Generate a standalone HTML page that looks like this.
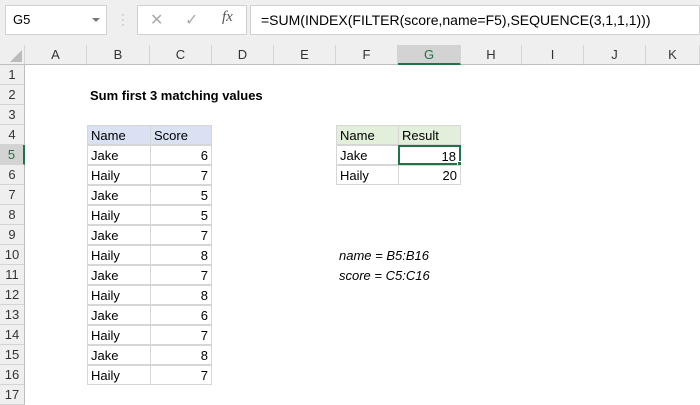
<!DOCTYPE html>
<html><head><style>
*{margin:0;padding:0;box-sizing:border-box}
body{width:700px;height:400px;overflow:hidden;background:#fff;font-family:"Liberation Sans",Calibri,sans-serif;font-size:13px;color:#000;position:relative}
.abs{position:absolute}
.ch{position:absolute;top:45px;height:20px;border-right:1px solid #d4d4d4;border-bottom:1px solid #bdbdbd;background:#efefef;text-align:center;line-height:19px;color:#333;font-size:13px}
.rh{position:absolute;left:0;width:25px;height:20px;border-bottom:1px solid #d4d4d4;border-right:1px solid #bdbdbd;background:#efefef;text-align:center;line-height:20px;color:#333;font-size:13px}
.c{position:absolute;height:20px;line-height:20px;padding:0 3px;white-space:nowrap;border:1px solid #d6d6d6}
.r{text-align:right}
</style></head><body>
<div class="abs" style="left:0;top:0;width:700px;height:45px;background:#efefef"></div>
<div class="abs" style="left:5px;top:5px;width:102px;height:30px;background:#fff;border:1px solid #d0d0d0;line-height:28px;padding-left:7px">G5</div>
<div class="abs" style="left:92px;top:18px;width:0;height:0;border-left:4px solid transparent;border-right:4px solid transparent;border-top:4px solid #777"></div>
<div class="abs" style="left:121px;top:12px;color:#aaa;font-size:12px;line-height:5px">·<br>·<br>·</div>
<div class="abs" style="left:137px;top:5px;width:110px;height:30px;background:#fff;border:1px solid #d0d0d0"></div>
<div class="abs" style="left:150px;top:10px;color:#aaa;font-size:16px">✕</div>
<div class="abs" style="left:185px;top:10px;color:#aaa;font-size:16px">✓</div>
<div class="abs" style="left:222px;top:9px;color:#555;font-family:'Liberation Serif',serif;font-style:italic;font-size:15px">fx</div>
<div class="abs" style="left:250px;top:5px;width:450px;height:30px;background:#fff;border:1px solid #d0d0d0;line-height:28px;padding-left:10px;font-size:14px">=SUM(INDEX(FILTER(score,name=F5),SEQUENCE(3,1,1,1)))</div>
<div class="ch" style="left:0;width:25px"></div>
<div class="abs" style="left:10px;top:50px;width:0;height:0;border-left:12px solid transparent;border-bottom:12px solid #bbb"></div>
<div class="ch" style="left:25px;width:62px">A</div>
<div class="ch" style="left:87px;width:63px">B</div>
<div class="ch" style="left:150px;width:62px">C</div>
<div class="ch" style="left:212px;width:62px">D</div>
<div class="ch" style="left:274px;width:62px">E</div>
<div class="ch" style="left:336px;width:62px">F</div>
<div class="ch" style="left:398px;width:63px;background:#d3d3d3;border-bottom:2px solid #217346;color:#217346">G</div>
<div class="ch" style="left:461px;width:61px">H</div>
<div class="ch" style="left:522px;width:62px">I</div>
<div class="ch" style="left:584px;width:62px">J</div>
<div class="ch" style="left:646px;width:54px">K</div>
<div class="rh" style="top:65px">1</div><div class="rh" style="top:85px">2</div><div class="rh" style="top:105px">3</div><div class="rh" style="top:125px">4</div>
<div class="rh" style="top:145px;background:#d3d3d3;border-right:2px solid #217346;color:#217346">5</div>
<div class="rh" style="top:165px">6</div><div class="rh" style="top:185px">7</div><div class="rh" style="top:205px">8</div><div class="rh" style="top:225px">9</div><div class="rh" style="top:245px">10</div><div class="rh" style="top:265px">11</div><div class="rh" style="top:285px">12</div><div class="rh" style="top:305px">13</div><div class="rh" style="top:325px">14</div><div class="rh" style="top:345px">15</div><div class="rh" style="top:365px">16</div><div class="rh" style="top:385px">17</div>
<div class="abs" style="left:90px;top:88px;font-weight:bold;font-size:13px">Sum first 3 matching values</div>
<div class="c" style="left:87px;top:125px;width:64px;background:#d9e1f2">Name</div>
<div class="c" style="left:150px;top:125px;width:62px;background:#d9e1f2">Score</div>
<div id="t"></div>
<div class="c" style="left:336px;top:125px;width:63px;background:#e2efda">Name</div>
<div class="c" style="left:398px;top:125px;width:63px;background:#e2efda">Result</div>
<div class="c" style="left:336px;top:145px;width:63px">Jake</div>
<div class="c r" style="left:398px;top:145px;width:63px;border:2px solid #217346">18</div>
<div class="abs" style="left:457px;top:161px;width:5px;height:5px;background:#217346;border:1px solid #fff"></div>
<div class="c" style="left:336px;top:165px;width:63px">Haily</div>
<div class="c r" style="left:398px;top:165px;width:63px">20</div>
<div class="abs" style="left:339px;top:248px;font-style:italic">name = B5:B16</div>
<div class="abs" style="left:339px;top:268px;font-style:italic">score = C5:C16</div>
<div class="c" style="left:87px;top:145px;width:64px">Jake</div><div class="c r" style="left:150px;top:145px;width:62px">6</div>
<div class="c" style="left:87px;top:165px;width:64px">Haily</div><div class="c r" style="left:150px;top:165px;width:62px">7</div>
<div class="c" style="left:87px;top:185px;width:64px">Jake</div><div class="c r" style="left:150px;top:185px;width:62px">5</div>
<div class="c" style="left:87px;top:205px;width:64px">Haily</div><div class="c r" style="left:150px;top:205px;width:62px">5</div>
<div class="c" style="left:87px;top:225px;width:64px">Jake</div><div class="c r" style="left:150px;top:225px;width:62px">7</div>
<div class="c" style="left:87px;top:245px;width:64px">Haily</div><div class="c r" style="left:150px;top:245px;width:62px">8</div>
<div class="c" style="left:87px;top:265px;width:64px">Jake</div><div class="c r" style="left:150px;top:265px;width:62px">7</div>
<div class="c" style="left:87px;top:285px;width:64px">Haily</div><div class="c r" style="left:150px;top:285px;width:62px">8</div>
<div class="c" style="left:87px;top:305px;width:64px">Jake</div><div class="c r" style="left:150px;top:305px;width:62px">6</div>
<div class="c" style="left:87px;top:325px;width:64px">Haily</div><div class="c r" style="left:150px;top:325px;width:62px">7</div>
<div class="c" style="left:87px;top:345px;width:64px">Jake</div><div class="c r" style="left:150px;top:345px;width:62px">8</div>
<div class="c" style="left:87px;top:365px;width:64px">Haily</div><div class="c r" style="left:150px;top:365px;width:62px">7</div>
</body></html>
